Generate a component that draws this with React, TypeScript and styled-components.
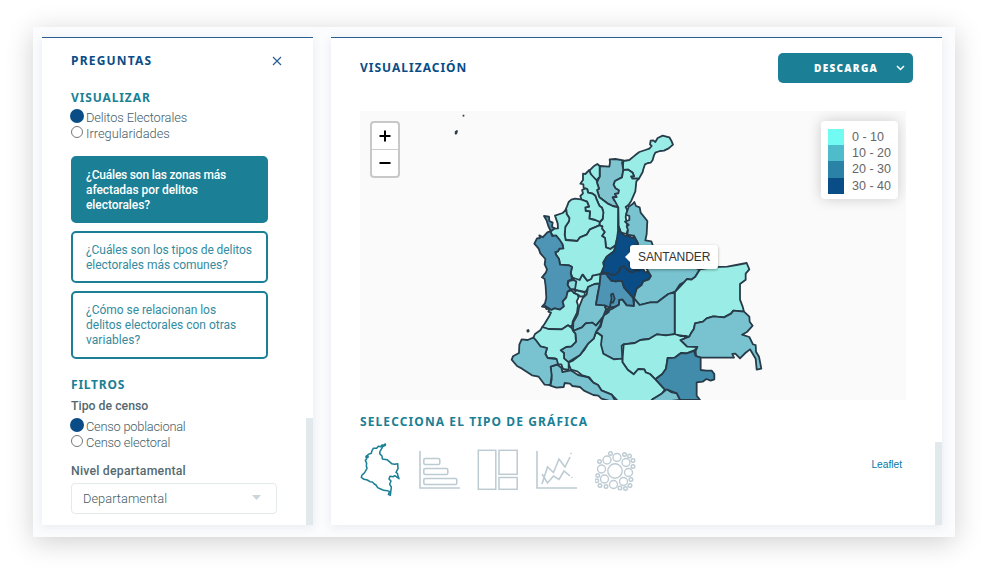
import React from "react";
import styled, { createGlobalStyle } from "styled-components";

const GlobalStyle = createGlobalStyle`
  * { box-sizing: border-box; }
  body { margin: 0; background: #fff; overflow: hidden; }
  button { font: inherit; margin: 0; cursor: pointer; }
`;

const teal = "#1b7f95";
const navy = "#0a4c86";
const bodyFont = `"Roboto", "Open Sans", sans-serif`;
const headFont = `"Noto Sans", "Open Sans", sans-serif`;

const Page = styled.div`
  width: 988px;
  height: 576px;
  padding: 27px 33px 39px;
  background: #fff;
`;

const Board = styled.main`
  display: flex;
  gap: 18px;
  width: 922px;
  height: 510px;
  padding: 10px 13px 12px 9px;
  background: #fbfcfe;
  box-shadow: 0 5px 26px rgba(0, 0, 0, 0.19);
`;

const Panel = styled.section<{ $width: number }>`
  display: flex;
  width: ${(p) => p.$width}px;
  height: 488px;
  border-top: 1px solid #2b5f94;
  background: #fff;
  box-shadow: 0 2px 10px rgba(40, 60, 80, 0.09);
`;

const PanelBody = styled.div`
  flex: 1;
  min-width: 0;
  padding-left: 29px;
`;

const ScrollTrack = styled.div`
  display: flex;
  align-items: flex-end;
  width: 7px;
`;

const ScrollThumb = styled.div<{ $height: number }>`
  width: 7px;
  height: ${(p) => p.$height}px;
  background: #e2e9ec;
`;

const Heading = styled.h2<{ $color?: string; $track?: number }>`
  margin: 0;
  height: 20px;
  font: 700 12px/20px ${headFont};
  letter-spacing: ${(p) => p.$track ?? 1}px;
  color: ${(p) => p.$color ?? teal};
  white-space: nowrap;
`;

const SideHeader = styled.header`
  display: flex;
  align-items: center;
  justify-content: space-between;
  width: 211px;
  height: 45px;
`;

const CloseButton = styled.button`
  display: flex;
  padding: 0;
  border: 0;
  background: none;
`;

const RadioGroup = styled.div`
  display: flex;
  flex-direction: column;
`;

const RadioRow = styled.label`
  display: flex;
  align-items: center;
  height: 16px;
  font: 300 12.8px/16px ${bodyFont};
  color: #435c66;
  white-space: nowrap;
`;

const RadioDot = styled.span<{ $on?: boolean }>`
  flex: none;
  width: ${(p) => (p.$on ? 14 : 12)}px;
  height: ${(p) => (p.$on ? 14 : 12)}px;
  margin: ${(p) => (p.$on ? "-4px 2px 0 -1px" : "-4px 3px 0 0")};
  border-radius: 50%;
  border: ${(p) => (p.$on ? "0" : "1px solid #777")};
  background: ${(p) => (p.$on ? navy : "#fff")};
`;

const Spaced = styled.span<{ $track: number }>`
  letter-spacing: ${(p) => p.$track}px;
  white-space: pre;
`;

const Questions = styled.div`
  display: flex;
  flex-direction: column;
  gap: 8px;
  width: 197px;
  margin-top: 14px;
`;

const Question = styled.button<{ $active?: boolean; $height: number }>`
  display: flex;
  flex-direction: column;
  justify-content: center;
  align-items: flex-start;
  height: ${(p) => p.$height}px;
  padding: 1px 0 0 13px;
  border: 2px solid ${teal};
  border-radius: 5px;
  background: ${(p) => (p.$active ? teal : "#fff")};
  color: ${(p) => (p.$active ? "#fff" : "#338ba0")};
  font: ${(p) => (p.$active ? 500 : 400)} 12px/15px ${bodyFont};
  text-align: left;
`;

const FieldLabel = styled.div`
  height: 16px;
  font: 500 12.3px/16px ${bodyFont};
  color: #546970;
`;

const Select = styled.div`
  display: flex;
  align-items: center;
  justify-content: space-between;
  width: 206px;
  height: 31px;
  margin-top: 4px;
  padding: 0 15px 0 11px;
  border: 1px solid #e4e9eb;
  border-radius: 4px;
  font: 300 12.8px/16px ${bodyFont};
  color: #435c66;
`;

const Gap = styled.div<{ $h: number }>`
  height: ${(p) => p.$h}px;
`;

const MainHeader = styled.header`
  display: flex;
  align-items: center;
  justify-content: space-between;
  width: 553px;
  height: 60px;
`;

const DownloadButton = styled.button`
  display: flex;
  align-items: center;
  justify-content: space-between;
  width: 135px;
  height: 30px;
  padding: 0 8px 0 36px;
  border: 0;
  border-radius: 5px;
  background: ${teal};
  color: #fff;
  font: 800 10px/14px "Open Sans", "Noto Sans", sans-serif;
`;

const MapFrame = styled.div`
  position: relative;
  width: 546px;
  height: 289px;
  margin-top: 13px;
  background: #fafafa;
  overflow: hidden;
`;

const MapSvg = styled.svg`
  display: block;
`;

const ZoomControl = styled.div`
  position: absolute;
  top: 10px;
  left: 10px;
  width: 30px;
  height: 57px;
  border: 2px solid #c8c8c8;
  border-radius: 4px;
  background: #fff;
`;

const ZoomButton = styled.button`
  display: flex;
  align-items: center;
  justify-content: center;
  width: 26px;
  height: 26px;
  padding: 0;
  border: 0;
  background: none;
  & + & { height: 27px; border-top: 1px solid #ccc; }
`;

const Legend = styled.div`
  position: absolute;
  top: 10px;
  right: 8px;
  width: 77px;
  height: 78px;
  padding: 8px 7px 0;
  border-radius: 4px;
  background: #fff;
  box-shadow: 0 0 14px rgba(0, 0, 0, 0.19);
`;

const LegendRow = styled.div<{ $color: string }>`
  display: flex;
  align-items: center;
  height: 16.2px;
  border-left: 16px solid ${(p) => p.$color};
  padding-left: 8px;
  font: 12.5px/16px "Liberation Sans", Arial, sans-serif;
  color: #666;
  white-space: nowrap;
`;

const Tooltip = styled.div`
  position: absolute;
  top: 134px;
  left: 270px;
  width: 88px;
  height: 24px;
  padding-left: 8px;
  border-radius: 3px;
  background: #fff;
  color: #333;
  font: 12px/24px "Liberation Sans", Arial, sans-serif;
  letter-spacing: -0.1px;
  box-shadow: 0 1px 3px rgba(0, 0, 0, 0.35);
  &::before {
    content: "";
    position: absolute;
    left: -5px;
    top: 6px;
    border: 6px solid transparent;
    border-left: 0;
    border-right-color: #fff;
  }
`;

const ChartRow = styled.div`
  display: flex;
  align-items: center;
  justify-content: space-between;
  width: 542px;
  height: 54px;
  margin-top: 11px;
`;

const ChartTypes = styled.div`
  display: flex;
  align-items: center;
  gap: 17.7px;
`;

const Leaflet = styled.a`
  margin-top: -11px;
  color: #0078a8;
  font: 10.2px/14px "Liberation Sans", Arial, sans-serif;
`;

const light = "#9aede6";
const mid = "#78c3cf";
const steel = "#4e94b4";

/* Departments, three units to the pixel. */
const regions: [string, string][] = [
  [light, "370,153 388,150 405,136 418,126 436,120 448,116 455,108 450,103 452,92 460,91 466,96 473,84 488,77 508,82 514,92 519,104 506,115 492,122 480,123 466,128 462,136 458,150 452,158 444,159 435,163 430,178 428,186 417,206 397,206 393,197 402,199 398,188 385,179 368,180"],
  ["#80c4cf", "329,148 346,147 370,151 366,157 370,180 366,202 345,213 341,224 347,235 357,241 355,250 345,252 350,261 338,262 344,272 352,280 355,292 338,288 322,280 298,262 291,240 297,236 291,218 294,210 299,200 299,168 328,170 330,158"],
  [light, "268,182 281,169 292,162 299,168 299,200 290,211 280,204 272,192"],
  [light, "268,180 256,192 249,191 249,210 241,221 250,223 251,234 262,238 264,248 278,251 286,257 290,269 298,287 306,293 310,307 308,327 299,336 298,345 307,349 306,356 314,366 306,378 315,384 318,412 331,417 348,405 350,391 357,375 354,352 355,292 338,288 322,280 298,262 291,240 297,236 291,218 290,211 272,192"],
  [light, "246,240 257,235 262,238 264,248 278,251 286,257 290,269 298,287 306,293 310,307 308,327 299,336 285,330 268,326 270,304 257,303 256,292 267,290 261,275 245,270 241,258 249,250"],
  [light, "243,268 225,266 214,269 206,276 201,289 197,298 200,312 208,324 207,334 196,350 194,374 197,390 232,393 240,382 260,374 270,358 298,346 299,336 285,330 268,326 270,304 257,303 256,292 267,290 261,275"],
  [light, "370,180 385,179 398,188 402,199 393,199 397,206 417,206 409,214 406,244 394,272 386,284 377,291 382,300 377,321 381,343 385,355 379,372 362,367 356,350 355,292 344,272 338,262 350,261 345,252 355,250 357,241 347,235 341,224 345,213 366,202"],
  [mid, "386,290 397,283 403,276 408,288 419,292 422,308 442,333 440,372 436,391 454,394 458,405 456,440 414,430 414,400 405,385 400,377 382,374 384,360 380,349 386,345 375,335 388,330 388,318 378,314 382,302"],
  [light, "165,317 188,309 199,298 200,312 208,324 207,334 196,350 194,374 197,390 232,393 240,382 260,374 270,358 298,346 307,349 306,356 314,366 306,378 315,384 318,412 331,417 348,405 342,424 320,440 310,457 312,470 302,492 290,499 278,497 274,507 262,513 249,494 239,510 221,510 212,489 216,471 207,466 180,464 177,447 168,434 166,426 174,424 178,416 190,415 187,402 176,390 157,375 151,365 162,356 174,355 173,340"],
  [steel, "132,318 147,320 148,333 158,338 156,350 164,355 151,365 157,378 168,376 178,388 187,402 190,415 178,416 174,424 166,426 168,434 177,447 180,464 207,466 216,471 212,489 216,507 205,513 203,523 212,538 203,545 199,562 188,575 192,589 180,599 164,595 154,600 139,592 126,590 135,580 139,564 137,530 134,507 126,502 138,487 141,478 134,463 136,447 121,430 116,416 103,401 111,385 120,384 118,376 128,382 142,367 152,363 145,348 140,332"],
  [light, "203,545 214,541 222,549 232,553 236,562 230,574 234,586 231,608 218,635 216,650 204,646 186,658 145,657 127,651 134,641 148,618 153,608 145,605 149,596 139,597 135,587 154,600 164,595 180,599 192,589 188,575 199,562"],
  [light, "203,523 205,513 222,510 221,504 239,510 247,494 262,513 274,507 278,497 302,492 300,520 284,522 264,531 261,540 255,546 225,540 212,538"],
  ["#8edbdb", "219,510 229,514 225,538 211,537 203,525 206,513"],
  [light, "229,541 254,547 254,558 242,560 234,554 222,549"],
  [mid, "264,531 284,522 300,521 293,552 288,584 314,585 318,598 309,621 288,647 277,638 257,640 246,652 219,663 220,637 233,614 237,592 248,564 260,553"],
  [steel, "302,492 320,491 334,512 347,514 366,512 372,532 399,563 402,588 380,586 367,569 358,570 357,584 343,591 327,592 314,586 288,584 299,522"],
  [navy, "356,350 362,367 376,378 386,377 398,385 402,377 413,399 414,430 426,471 436,488 444,483 453,498 447,508 430,514 425,525 410,536 405,559 399,563 372,532 366,512 347,514 334,512 324,501 318,490 305,488 312,470 310,457 320,440 342,424 350,391"],
  [mid, "414,430 456,440 600,478 593,488 586,500 574,509 561,507 552,517 540,523 525,545 505,552 472,577 451,577 419,585 402,565 410,536 425,525 430,514 447,508 453,498 444,483"],
  [light, "600,478 640,471 682,470 709,465 740,459 748,478 737,491 737,509 720,522 720,569 728,590 732,605 700,602 693,611 672,622 640,619 620,625 609,635 585,640 582,656 573,670 568,680 524,674 524,547 552,517 561,507 574,509 586,500"],
  [mid, "732,605 748,620 749,635 758,647 742,665 726,674 748,681 759,703 767,705 768,725 777,740 784,776 770,779 767,746 750,718 736,729 720,745 706,731 697,732 702,743 602,743 588,738 587,723 592,711 561,710 541,690 568,680 573,670 582,656 585,640 609,635 620,625 640,619 672,622 693,611 700,602"],
  [mid, "402,565 419,585 451,577 472,577 505,552 524,547 524,674 498,676 471,673 447,687 421,690 405,699 371,703 365,707 367,746 341,748 310,731 299,700 306,678 288,665 302,650 309,621 323,603 337,596 357,584 358,570 367,569 380,586 402,588"],
  [light, "371,703 405,699 421,690 447,687 471,673 498,676 524,672 540,678 558,678 552,686 541,690 561,710 592,711 584,720 560,730 543,729 524,743 503,744 498,776 487,792 466,808 450,792 437,787 433,778 415,777 401,793 383,779 367,756"],
  ["#418cab", "503,744 524,743 543,729 560,730 582,723 587,738 602,743 602,780 619,782 635,782 643,792 643,808 632,812 619,807 608,815 590,817 590,857 600,870 540,870 530,850 505,840 494,839 466,808 487,792 498,776"],
  [light, "288,667 297,672 306,679 303,704 310,731 341,748 367,746 367,756 383,779 401,793 415,777 433,778 437,787 450,792 466,808 494,839 485,851 459,867 445,880 360,880 335,854 304,841 294,825 280,818 268,802 245,795 232,784 213,779 204,758 217,753 240,735 254,718 265,700 281,686"],
  [mid, "500,838 513,846 530,850 540,870 445,880 459,867 485,851"],
  [mid, "152,770 172,764 184,773 187,786 212,781 234,795 265,802 280,818 294,825 304,841 335,854 350,880 320,870 304,866 295,857 280,855 252,842 240,831 217,828 210,821 194,819 191,831 169,833 151,827 155,808"],
  [mid, "219,663 246,652 257,640 277,638 288,647 309,621 300,647 288,665 281,686 265,700 240,735 204,757 192,745 192,729 182,721 198,711 214,709 228,695 226,671"],
  [light, "100,683 105,672 121,661 127,651 145,657 186,658 204,646 216,655 219,663 226,671 228,695 214,709 198,711 182,721 192,729 192,745 206,757 206,780 189,777 184,763 173,763 166,745 143,744 136,732 141,714 121,709"],
  [mid, "65,688 83,690 100,683 109,692 121,709 141,714 136,732 143,744 170,747 174,762 152,770 155,796 151,825 134,824 116,800 96,796 66,776 51,768 35,749 39,739 57,729 58,704"],
];

const borders = [
  "305,488 325,489 332,494 347,494 361,480 358,475 372,468 386,484 399,488 407,481 421,482",
  "329,597 332,577 335,566 333,554 339,551 344,566 339,578 333,576",
  "314,590 322,600 318,612 327,605 323,597 330,592",
  "356,350 362,367",
];

const outline =
  "106,117 100,121 96,120 92,125 85,124 80,130 70,130 66,137 64,145 57,147 52,151 48,155 50,162 46,166 50,175 49,183 51,190 46,199 42,205 36,210 34,217 42,223 52,225 60,230 67,231 73,237 78,240 83,248 92,252 101,256 112,257 119,260 115,268 121,271 124,246 119,238 123,228 117,222 120,214 130,215 134,212 139,215 147,221 144,212 142,205 138,202 144,191 143,176 134,178 125,176 118,170 111,164 97,162 96,153 89,146 90,139 95,131 98,125 106,121";

const swatches: [string, string][] = [
  ["#72fbf3", "0 - 10"],
  ["#4ebcca", "10 - 20"],
  ["#2a83a7", "20 - 30"],
  [navy, "30 - 40"],
];

const bubbles: [number, number, number][] = [
  [20, 22, 7.2], [22, 8.5, 4], [12, 11, 4], [31, 13.5, 4], [6.5, 20, 4], [33.5, 23.5, 4],
  [9.5, 30, 4], [18.5, 35.5, 4], [28.5, 32.5, 4], [15.5, 4.5, 1.8], [29.5, 5.5, 1.8],
  [34.5, 7, 1.8], [38, 11.5, 1.8], [38, 17.5, 1.8], [4.5, 12.5, 1.8], [2.7, 26.5, 1.8],
  [1.8, 31.8, 1.8], [5, 36.5, 1.8], [11, 37.5, 1.8], [25, 39, 1.8], [30.5, 39.5, 1.8],
  [35, 36.5, 1.8], [36, 30.5, 1.8],
];

const iconStroke = "#bdcbd3";

function ColombiaMap() {
  return (
    <MapSvg width="546" height="289" viewBox="-420 3 1638 867">
      <g stroke="#273b49" strokeWidth="5.4" strokeLinejoin="round">
        {regions.map(([fill, points], i) => (
          <polygon key={i} points={points} fill={fill} />
        ))}
        {borders.map((points, i) => (
          <polyline key={i} points={points} fill="none" />
        ))}
        <path d="M82 661l3-1 1 4-3 1z" />
        <path d="M-133 66l4-3-2 7-2 1z" />
        <path d="M-112 17h5" />
      </g>
    </MapSvg>
  );
}

function ChartIcons() {
  return (
    <ChartTypes>
      <svg width="41" height="54" viewBox="30 114 123 162" fill="none" stroke={teal} strokeWidth="4.6" strokeLinejoin="round">
        <polygon points={outline} />
        <circle cx="52" cy="155" r="2.5" />
      </svg>
      <svg width="41" height="42" viewBox="0 0 41 42" fill="none" stroke={iconStroke} strokeWidth="1.6">
        <path d="M1 2v37h40" />
        <rect x="4.8" y="9.5" width="16" height="6" rx="1.5" />
        <rect x="4.8" y="19.5" width="24" height="6" rx="1.5" />
        <rect x="4.8" y="29.5" width="33" height="6" rx="1.5" />
      </svg>
      <svg width="41" height="42" viewBox="0 0 41 42" fill="none" stroke={iconStroke} strokeWidth="1.5">
        <rect x="1.3" y="1.3" width="17.5" height="39" />
        <rect x="22" y="1.3" width="18.2" height="24" />
        <rect x="22" y="28.5" width="18.2" height="11.8" />
      </svg>
      <svg width="41" height="42" viewBox="0 0 41 42" fill="none" stroke={iconStroke} strokeWidth="1.6">
        <path d="M1 2v37h40M6 35l5.5-17 6 5.5L23 10l6 8 5-10M34.8 5l.5-1.2M6 25l5.5 9 6-7 5.5 3.5L28 22l6 5M35.500 28l.8.8" />
      </svg>
      <svg width="41" height="42" viewBox="0 0 41 42" fill="none" stroke={iconStroke} strokeWidth="1.4">
        {bubbles.map(([x, y, r], i) => (
          <circle key={i} cx={x} cy={y} r={r} />
        ))}
      </svg>
    </ChartTypes>
  );
}

export default function App() {
  return (
    <Page>
      <GlobalStyle />
      <Board>
        <Panel $width={271}>
          <PanelBody>
            <SideHeader>
              <Heading $color={navy} $track={1.2}>PREGUNTAS</Heading>
              <CloseButton aria-label="Cerrar">
                <svg width="10" height="10" viewBox="0 0 10 10" stroke="#2b5f94" strokeWidth="1.2">
                  <path d="M1 1l8 8M9 1L1 9" />
                </svg>
              </CloseButton>
            </SideHeader>
            <Gap $h={5} />
            <Heading $track={0.88}>VISUALIZAR</Heading>
            <Gap $h={2} />
            <RadioGroup>
              <RadioRow><RadioDot $on /><Spaced $track={-0.1}>Delitos Electorales</Spaced></RadioRow>
              <RadioRow><RadioDot /><Spaced $track={0}>Irregularidades</Spaced></RadioRow>
            </RadioGroup>
            <Questions>
              <Question $active $height={67}>
                <Spaced $track={-0.2}>¿Cuáles son las zonas más</Spaced>
                <Spaced $track={-0.06}>afectadas por delitos</Spaced>
                <Spaced $track={-0.06}>electorales?</Spaced>
              </Question>
              <Question $height={52}>
                <Spaced $track={-0.07}>¿Cuáles son los tipos de delitos</Spaced>
                <Spaced $track={-0.04}>electorales más comunes?</Spaced>
              </Question>
              <Question $height={68}>
                <Spaced $track={-0.03}>¿Cómo se relacionan los</Spaced>
                <Spaced $track={0}>delitos electorales con otras</Spaced>
                <Spaced $track={0.05}>variables?</Spaced>
              </Question>
            </Questions>
            <Gap $h={16} />
            <Heading $track={0.8}>FILTROS</Heading>
            <Gap $h={3} />
            <FieldLabel><Spaced $track={0}>Tipo de censo</Spaced></FieldLabel>
            <Gap $h={5} />
            <RadioGroup>
              <RadioRow><RadioDot $on /><Spaced $track={-0.22}>Censo poblacional</Spaced></RadioRow>
              <RadioRow><RadioDot /><Spaced $track={-0.15}>Censo electoral</Spaced></RadioRow>
            </RadioGroup>
            <Gap $h={12} />
            <FieldLabel><Spaced $track={0.2}>Nivel departamental</Spaced></FieldLabel>
            <Select>
              <Spaced $track={0.05}>Departamental</Spaced>
              <svg width="9" height="7" viewBox="0 0 9 7"><path d="M0 0h9L4.5 5z" fill="#cbd6dc" /></svg>
            </Select>
          </PanelBody>
          <ScrollTrack><ScrollThumb $height={107} /></ScrollTrack>
        </Panel>

        <Panel $width={611}>
          <PanelBody>
            <MainHeader>
              <Heading $color={navy}>VISUALIZACIÓN</Heading>
              <DownloadButton>
                <Spaced $track={1.3}>DESCARGA</Spaced>
                <svg width="9" height="6" viewBox="0 0 9 6" fill="none" stroke="#fff" strokeWidth="1.5"><path d="M1 1l3.5 3.5L8 1" /></svg>
              </DownloadButton>
            </MainHeader>
            <MapFrame>
              <ColombiaMap />
              <ZoomControl>
                <ZoomButton aria-label="Acercar">
                  <svg width="12" height="12" viewBox="0 0 12 12" stroke="#000" strokeWidth="2"><path d="M6 .5v11M.5 6h11" /></svg>
                </ZoomButton>
                <ZoomButton aria-label="Alejar">
                  <svg width="12" height="12" viewBox="0 0 12 12" stroke="#000" strokeWidth="2"><path d="M.5 6h11" /></svg>
                </ZoomButton>
              </ZoomControl>
              <Tooltip>SANTANDER</Tooltip>
              <Legend>
                {swatches.map(([color, label]) => (
                  <LegendRow key={label} $color={color}>{label}</LegendRow>
                ))}
              </Legend>
            </MapFrame>
            <Gap $h={12} />
            <Heading $track={1.1}>SELECCIONA EL TIPO DE GRÁFICA</Heading>
            <ChartRow>
              <ChartIcons />
              <Leaflet>Leaflet</Leaflet>
            </ChartRow>
          </PanelBody>
          <ScrollTrack><ScrollThumb $height={83} /></ScrollTrack>
        </Panel>
      </Board>
    </Page>
  );
}
